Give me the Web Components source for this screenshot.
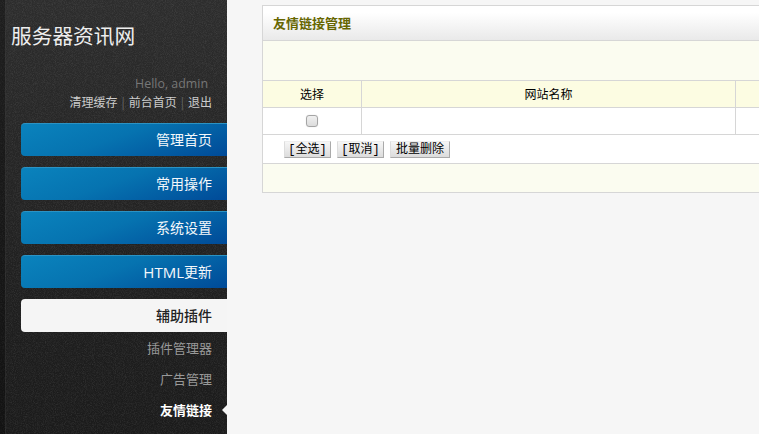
<!DOCTYPE html>
<html lang="zh">
<head>
<meta charset="utf-8">
<title>友情链接管理</title>
<style>
  html, body { margin: 0; height: 100%; overflow: hidden; background: #f6f6f6; }
  body { font-family: "Liberation Sans", "Noto Sans CJK SC", sans-serif; }
  #page { display: flex; align-items: flex-start; height: 434px; width: 759px; overflow: hidden; }
  .latin { font-size: 15px; }
</style>
</head>
<body>
<div id="page">
  <admin-sidebar title-text="服务器资讯网">
    <nav-button>管理首页</nav-button>
    <nav-button>常用操作</nav-button>
    <nav-button>系统设置</nav-button>
    <nav-button><span class="latin">HTML</span>更新</nav-button>
    <nav-button active>辅助插件</nav-button>
    <nav-sub>插件管理器</nav-sub>
    <nav-sub>广告管理</nav-sub>
    <nav-sub current>友情链接</nav-sub>
  </admin-sidebar>
  <link-panel heading="友情链接管理"></link-panel>
</div>

<script>
// Barra lateral fosca amb el títol i les dades de l'usuari
class AdminSidebar extends HTMLElement {
  constructor() {
    super();
    this.attachShadow({ mode: 'open' });
  }

  connectedCallback() {
    this.shadowRoot.innerHTML = `
      <style>
        :host {
          display: block;
          position: relative;
          flex: 0 0 227px;
          width: 227px;
          height: 434px;
          overflow: hidden;
          box-sizing: border-box;
          background: linear-gradient(180deg, #2d2d2d 0, #272727 130px, #1f1f1f 300px, #1b1b1b 100%);
          color: #fff;
        }
        .grain { position: absolute; inset: 0; width: 100%; height: 100%; }
        .strip {
          position: absolute; left: 0; top: 0; bottom: 0; width: 5px;
          background: rgba(0, 0, 0, .32);
          border-right: 1px solid rgba(255, 255, 255, .09);
        }
        .inner { position: relative; display: flex; flex-direction: column; }
        h1 {
          margin: 0;
          padding: 22px 0 0 11px;
          height: 48px;
          font: 400 20.7px/26px "Noto Sans CJK SC", sans-serif;
          color: #eee;
        }
        .user { padding-right: 15px; text-align: right; }
        .hello {
          margin-top: 5px;
          padding-right: 4px;
          height: 18px;
          font: 12.4px/18px "Open Sans", sans-serif;
          color: #777;
        }
        .links {
          display: flex;
          justify-content: flex-end;
          gap: 4px;
          height: 18px;
          font: 12px/18px "Noto Sans CJK SC", sans-serif;
          color: #666;
        }
        .links a { color: #ccc; text-decoration: none; }
        nav { display: flex; flex-direction: column; margin-top: 12px; padding-left: 21px; }
      </style>
      <svg class="grain" aria-hidden="true">
        <filter id="n"><feTurbulence type="fractalNoise" baseFrequency="1.1" numOctaves="2" seed="4"/>
          <feColorMatrix values="0 0 0 0 1  0 0 0 0 1  0 0 0 0 1  1.1 0 0 0 -.42"/></filter>
        <rect width="100%" height="100%" filter="url(#n)" opacity=".16"/>
      </svg>
      <div class="strip"></div>
      <div class="inner">
        <h1>${this.getAttribute('title-text')}</h1>
        <div class="user">
          <div class="hello">Hello, admin</div>
          <div class="links"><a>清理缓存</a><span>|</span><a>前台首页</a><span>|</span><a>退出</a></div>
        </div>
        <nav><slot></slot></nav>
      </div>`;
  }
}

// Botó principal del menú (blau, o blanc si està actiu)
class NavButton extends HTMLElement {
  constructor() {
    super();
    this.attachShadow({ mode: 'open' });
    this.shadowRoot.innerHTML = `
      <style>
        :host {
          display: flex;
          justify-content: flex-end;
          align-items: center;
          box-sizing: border-box;
          height: 33px;
          margin-bottom: 11px;
          padding-right: 15px;
          border-radius: 4px 0 0 4px;
          border-top: 1px solid #2b93c4;
          background: linear-gradient(160deg, #0a83bd 0%, #0673b0 45%, #004a98 100%);
          font: 14px/1 "Open Sans", "Noto Sans CJK SC", sans-serif;
          color: #f4f8fb;
        }
        :host([active]) {
          margin-bottom: 0;
          border-top: 0;
          background: #f5f5f5;
          color: #222;
          font-weight: 500;
        }
      </style>
      <slot></slot>`;
  }
}

// Enllaç del submenú; el "current" porta una fletxa cap a l'esquerra
class NavSub extends HTMLElement {
  constructor() {
    super();
    this.attachShadow({ mode: 'open' });
    this.shadowRoot.innerHTML = `
      <style>
        :host {
          display: flex;
          justify-content: flex-end;
          align-items: center;
          position: relative;
          height: 31px;
          padding-right: 15px;
          font: 13px/1 "Noto Sans CJK SC", sans-serif;
          color: #999;
        }
        :host([current]) { color: #fff; font-weight: 700; }
        :host([current])::after {
          content: "";
          position: absolute;
          right: 0;
          top: 11px;
          border: solid transparent;
          border-width: 5px 5px 5px 0;
          border-right-color: #f5f5f5;
        }
      </style>
      <slot></slot>`;
  }
}

// Fila de la graella amb les columnes fixes de la taula
class GridRow extends HTMLElement {
  constructor() {
    super();
    this.attachShadow({ mode: 'open' });
    this.shadowRoot.innerHTML = `
      <style>
        :host {
          display: grid;
          grid-template-columns: 99px 374px 1fr;
          height: 26px;
          border-bottom: 1px solid #d6d6d6;
          font: 12px/26px "Noto Sans CJK SC", sans-serif;
          color: #000;
          text-align: center;
        }
        :host([head]) { background: #fcfce2; }
        :host([body]) { background: #fff; }
        ::slotted(*) { box-sizing: border-box; border-right: 1px solid #d6d6d6; height: 26px; }
        ::slotted(:last-child) { border-right: 0; }
      </style>
      <slot></slot>`;
  }
}

// Casella de selecció dibuixada
class GridCheck extends HTMLElement {
  constructor() {
    super();
    this.attachShadow({ mode: 'open' });
    this.shadowRoot.innerHTML = `
      <style>
        :host { display: flex; justify-content: center; align-items: center; }
        i {
          display: block;
          box-sizing: border-box;
          width: 12px;
          height: 12px;
          border: 1px solid #a5a5a5;
          border-radius: 3px;
          background: linear-gradient(180deg, #f0f0f0, #dcdcdc);
          box-shadow: 0 0 1px #ccc;
        }
      </style>
      <i></i>`;
  }
}

// Botó petit d'acció de la taula
class ToolButton extends HTMLElement {
  constructor() {
    super();
    this.attachShadow({ mode: 'open' });
    this.shadowRoot.innerHTML = `
      <style>
        :host {
          display: inline-flex;
          justify-content: center;
          align-items: center;
          box-sizing: border-box;
          width: 47px;
          height: 17px;
          border-right: 1px solid #aaa;
          border-bottom: 1px solid #aaa;
          border-left: 1px solid #ddd;
          border-top: 1px solid #eee;
          background: linear-gradient(180deg, #f6f6f6, #dcdcdc);
          font: 12px/1 "Liberation Mono", "Noto Sans CJK SC", monospace;
          color: #000;
        }
        :host([wide]) { width: 60px; }
      </style>
      <slot></slot>`;
  }
}

// Tauler de gestió d'enllaços
class LinkPanel extends HTMLElement {
  constructor() {
    super();
    this.attachShadow({ mode: 'open' });
  }

  connectedCallback() {
    this.shadowRoot.innerHTML = `
      <style>
        :host {
          display: block;
          flex: 0 0 640px;
          box-sizing: border-box;
          margin: 5px 0 0 35px;
          border: 1px solid #d6d6d6;
          background: #fff;
        }
        header {
          box-sizing: border-box;
          height: 35px;
          padding-left: 10px;
          border-bottom: 1px solid #d6d6d6;
          background: linear-gradient(180deg, #fff 0, #fff 20%, #e9e9e9 100%);
          font: 700 13px/33px "Noto Sans CJK SC", sans-serif;
          color: #666600;
        }
        .note {
          box-sizing: border-box;
          height: 40px;
          background: #fbfcf0;
          border-bottom: 1px solid #d6d6d6;
        }
        .tools {
          display: flex;
          gap: 6px;
          box-sizing: border-box;
          height: 29px;
          padding: 6px 0 0 21px;
          border-bottom: 1px solid #d6d6d6;
        }
        .foot { height: 28px; background: #fbfcf0; }
      </style>
      <header>${this.getAttribute('heading')}</header>
      <div class="note"></div>
      <grid-row head><div>选择</div><div>网站名称</div><div></div></grid-row>
      <grid-row body><grid-check></grid-check><div></div><div></div></grid-row>
      <div class="tools">
        <tool-button>[全选]</tool-button>
        <tool-button>[取消]</tool-button>
        <tool-button wide>批量删除</tool-button>
      </div>
      <div class="foot"></div>`;
  }
}

customElements.define('admin-sidebar', AdminSidebar);
customElements.define('nav-button', NavButton);
customElements.define('nav-sub', NavSub);
customElements.define('grid-row', GridRow);
customElements.define('grid-check', GridCheck);
customElements.define('tool-button', ToolButton);
customElements.define('link-panel', LinkPanel);
</script>
</body>
</html>
